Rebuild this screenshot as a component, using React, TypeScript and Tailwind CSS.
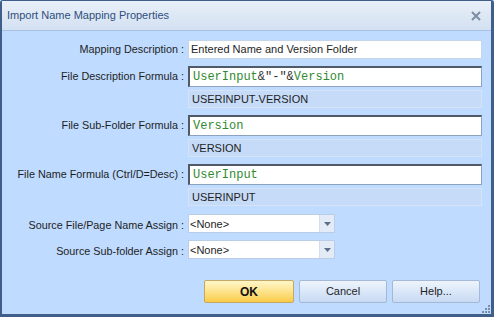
import { ChevronDown } from 'lucide-react'

const labelCls = 'w-[186px] shrink-0 pr-[4px] text-right text-[10.8px] text-[#1e1e1e]'

const Formula = ({ children }: { children: React.ReactNode }) => (
  <div className="w-[294px] h-[21px] bg-white border-t-2 border-l-2 border-r border-b border-t-[#4f5a66] border-l-[#4f5a66] border-r-[#8da2bd] border-b-[#8da2bd] flex items-center pl-[3px] font-['Liberation_Mono',monospace] text-[12px] leading-none">
    {children}
  </div>
)

const Result = ({ text }: { text: string }) => (
  <div className="w-[294px] h-[18px] bg-[#c6dbf7] border border-[#d4e3f6] flex items-center pl-[3px] text-[11px] text-[#1e1e1e]">
    {text}
  </div>
)

const Combo = () => (
  <div className="w-[147px] h-[19px] bg-white border border-[#b9cde6] flex">
    <div className="flex-1 flex items-start pl-[1px] pt-[1px] text-[11px] text-[#1e1e1e]">&lt;None&gt;</div>
    <div className="w-[15px] border-l border-[#d2deee] bg-[#e3ebf6] flex items-center justify-center">
      <svg width="7" height="4" viewBox="0 0 7 4">
        <path d="M0 0h7L3.5 4z" fill="#5b6f8a" />
      </svg>
    </div>
  </div>
)

const Button = ({ label, primary }: { label: string; primary?: boolean }) => (
  <div
    className={
      primary
        ? 'w-[90px] h-[23px] rounded-[2px] border border-[#c4a865] bg-gradient-to-b from-[#fff6c8] via-[#fde38a] to-[#f9cb45] flex items-center justify-center text-[12px] font-bold text-[#111]'
        : 'w-[88px] h-[23px] rounded-[2px] border border-[#a3b9d6] bg-gradient-to-b from-[#eef4fc] via-[#dae7f8] to-[#c8daf2] flex items-center justify-center text-[11px] text-[#1e1e1e]'
    }
  >
    {label}
  </div>
)

const green = 'text-[#2f8a2f]'

export default function App() {
  return (
    <div className="w-[494px] h-[317px] bg-[#bfdbff] font-['Liberation_Sans',Arial,sans-serif]">
      <div className="w-[494px] h-[317px] border-l-2 border-r-[3px] border-b-[3px] border-t border-[#3f5f8a] rounded-t-[3px] flex flex-col relative">
        {/* title bar */}
        <div className="h-[30px] shrink-0 bg-gradient-to-b from-[#e8eff8] to-[#d3e1f2] border-b border-[#a8c1e0] flex items-center justify-between pl-[5px] pr-[10px]">
          <span className="text-[11px] text-[#2f4f7c]">Import Name Mapping Properties</span>
          <svg width="10" height="10" viewBox="0 0 10 10">
            <path d="M1 1l8 8M9 1l-8 8" stroke="#7d8da2" strokeWidth="2" />
          </svg>
        </div>

        {/* body */}
        <div className="flex flex-col pt-[9px]">
          <div className="flex items-center h-[19px]">
            <div className={labelCls}>Mapping Description :</div>
            <div className="w-[294px] h-[19px] bg-white border border-[#c5d6ea] flex items-center pl-[2px] text-[11px] text-[#1e1e1e]">
              Entered Name and Version Folder
            </div>
          </div>

          <div className="flex items-center mt-[7px]">
            <div className={labelCls}>File Description Formula :</div>
            <Formula>
              <span className={green}>UserInput</span>
              <span className="text-[#333]">&amp;"-"&amp;</span>
              <span className={green}>Version</span>
            </Formula>
          </div>
          <div className="flex mt-[3px]">
            <div className="w-[186px] shrink-0" />
            <Result text="USERINPUT-VERSION" />
          </div>

          <div className="flex items-center mt-[7px]">
            <div className={labelCls}>File Sub-Folder Formula :</div>
            <Formula>
              <span className={green}>Version</span>
            </Formula>
          </div>
          <div className="flex mt-[3px]">
            <div className="w-[186px] shrink-0" />
            <Result text="VERSION" />
          </div>

          <div className="flex items-center mt-[7px]">
            <div className={labelCls}>File Name Formula (Ctrl/D=Desc) :</div>
            <Formula>
              <span className={green}>UserInput</span>
            </Formula>
          </div>
          <div className="flex mt-[3px]">
            <div className="w-[186px] shrink-0" />
            <Result text="USERINPUT" />
          </div>

          <div className="flex items-end mt-[8px]">
            <div className={labelCls}>Source File/Page Name Assign :</div>
            <Combo />
          </div>
          <div className="flex items-end mt-[7px]">
            <div className={labelCls}>Source Sub-folder Assign :</div>
            <Combo />
          </div>

          <div className="flex justify-end gap-[5px] pr-[11px] mt-[21px]">
            <Button label="OK" primary />
            <Button label="Cancel" />
            <Button label="Help..." />
          </div>
        </div>

        {/* resize grip */}
        <svg className="absolute right-[1px] bottom-[1px]" width="9" height="9" viewBox="0 0 9 9">
          {[
            [7, 1], [7, 4], [4, 4], [7, 7], [4, 7], [1, 7],
          ].map(([x, y]) => (
            <rect key={`${x}-${y}`} x={x} y={y} width="2" height="2" fill="#7a8ea8" />
          ))}
        </svg>
      </div>
    </div>
  )
}
